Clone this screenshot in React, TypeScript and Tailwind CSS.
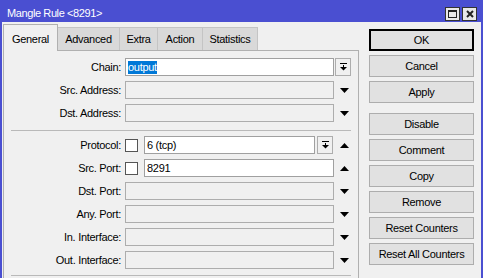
import React from "react";

const Down = () => (
  <svg width="9" height="5" viewBox="0 0 9 5" className="block">
    <path d="M0 0H9L4.5 5Z" fill="#000" />
  </svg>
);
const Up = () => (
  <svg width="9" height="5" viewBox="0 0 9 5" className="block">
    <path d="M0 5H9L4.5 0Z" fill="#000" />
  </svg>
);
const DropIcon = () => (
  <svg width="7" height="8" viewBox="0 0 7 8" className="block">
    <rect x="0" y="0" width="7" height="1" fill="#000" />
    <rect x="3" y="2" width="1" height="2" fill="#000" />
    <path d="M0 4H7L3.5 7.5Z" fill="#000" />
  </svg>
);

const DropBtn = () => (
  <div className="w-[16px] h-[18px] border border-[#adadad] bg-[#f0f0f0] flex items-center justify-center">
    <DropIcon />
  </div>
);

const Label = ({ children }: { children: React.ReactNode }) => (
  <div className="w-[117px] shrink-0 text-right text-black">{children}</div>
);

const Field = ({
  w,
  white,
  children,
}: {
  w: string;
  white?: boolean;
  children?: React.ReactNode;
}) => (
  <div
    className={`${w} h-[18px] border ${
      white ? "bg-white border-[#a0a0a0]" : "bg-[#f0f0f0] border-[#adadad]"
    } flex items-center pl-[2px] text-black`}
  >
    {children}
  </div>
);

const Check = () => (
  <div className="w-[13px] h-[13px] border border-[#555555] bg-white shrink-0" />
);

const ArrowRow = ({ label }: { label: string }) => (
  <div className="flex items-center h-[18px]">
    <Label>{label}</Label>
    <div className="ml-[4px]">
      <Field w="w-[209px]" />
    </div>
    <div className="ml-[6px]">
      <Down />
    </div>
  </div>
);

const Btn = ({
  children,
  def,
  cls = "",
}: {
  children: React.ReactNode;
  def?: boolean;
  cls?: string;
}) => (
  <div
    className={`w-[105px] h-[22px] flex items-center justify-center bg-[#e1e1e1] text-black ${
      def ? "border-2 border-black" : "border border-[#adadad]"
    } ${cls}`}
  >
    {children}
  </div>
);

export default function App() {
  const tabs = [
    { t: "Advanced", w: "w-[63px]" },
    { t: "Extra", w: "w-[39px]" },
    { t: "Action", w: "w-[46px]" },
    { t: "Statistics", w: "w-[56px]" },
  ];
  return (
    <div className="w-[483px] h-[278px] overflow-hidden bg-[#f0f0f0] flex flex-col font-['Liberation_Sans',Arial,sans-serif] text-[11px] leading-[13px] tracking-[-0.3px] select-none">
      {/* title bar */}
      <div className="h-[22px] shrink-0 bg-[#4a4fd1] flex items-start">
        <div className="pt-[7px] pl-[7px] text-white text-[11px] tracking-[-0.4px]">
          Mangle Rule &lt;8291&gt;
        </div>
        <div className="ml-auto mr-[6px] mt-[7px] flex gap-[2px]">
          <div className="w-[15px] h-[14px] bg-[#e8e8e8] border border-[#333] flex items-center justify-center">
            <svg width="9" height="8" viewBox="0 0 9 8" className="block">
              <rect x="0.5" y="0.5" width="8" height="7" fill="none" stroke="#222" />
              <rect x="0" y="0" width="9" height="2" fill="#222" />
            </svg>
          </div>
          <div className="w-[15px] h-[14px] bg-[#e8e8e8] border border-[#333] flex items-center justify-center">
            <svg width="8" height="8" viewBox="0 0 8 8" className="block">
              <path d="M1 1L7 7M7 1L1 7" stroke="#222" strokeWidth="2" />
            </svg>
          </div>
        </div>
      </div>

      {/* body */}
      <div className="flex-1 flex border-x-2 border-[#4a4fd1] pl-[1px]">
        {/* left: tabs + panel */}
        <div className="w-[356px] shrink-0 flex flex-col pt-[2px]">
          <div className="flex items-end h-[26px]">
            <div className="relative z-10 self-start w-[55px] h-[27px] bg-[#f0f0f0] border border-b-0 border-[#b0b0b0] flex justify-center pt-[8px] text-black">
              General
            </div>
            {tabs.map((x) => (
              <div
                key={x.t}
                className={`${x.w} -ml-px h-[23px] bg-[#d9d9d9] border border-b-0 border-[#c4c4c4] flex justify-center pt-[5px] text-black`}
              >
                {x.t}
              </div>
            ))}
          </div>
          <div className="h-[260px] border border-[#b0b0b0] flex flex-col pt-[7px]">
            <div className="flex flex-col gap-[5px]">
              <div className="flex items-center h-[18px]">
                <Label>Chain:</Label>
                <div className="ml-[4px]">
                  <Field w="w-[209px]" white>
                    <span className="bg-[#0078d7] text-white">output</span>
                  </Field>
                </div>
                <div className="ml-[1px]">
                  <DropBtn />
                </div>
              </div>
              <ArrowRow label="Src. Address:" />
              <ArrowRow label="Dst. Address:" />
            </div>
            <div className="mt-[8px] mx-[7px] h-px bg-[#b9b9b9]" />
            <div className="mt-[5px] flex flex-col gap-[5px]">
              <div className="flex items-center h-[18px]">
                <Label>Protocol:</Label>
                <div className="ml-[4px]">
                  <Check />
                </div>
                <div className="ml-[6px]">
                  <Field w="w-[171px]" white>
                    6 (tcp)
                  </Field>
                </div>
                <div className="ml-[2px]">
                  <DropBtn />
                </div>
                <div className="ml-[7px]">
                  <Up />
                </div>
              </div>
              <div className="flex items-center h-[18px]">
                <Label>Src. Port:</Label>
                <div className="ml-[4px]">
                  <Check />
                </div>
                <div className="ml-[6px]">
                  <Field w="w-[190px]" white>
                    8291
                  </Field>
                </div>
                <div className="ml-[6px]">
                  <Up />
                </div>
              </div>
              <ArrowRow label="Dst. Port:" />
              <ArrowRow label="Any. Port:" />
              <ArrowRow label="In. Interface:" />
              <ArrowRow label="Out. Interface:" />
            </div>
            <div className="mt-[6px] mx-[7px] h-px bg-[#b9b9b9]" />
          </div>
        </div>

        {/* right: buttons */}
        <div className="ml-[10px] pt-[7px] flex flex-col gap-[4px]">
          <Btn def>OK</Btn>
          <Btn>Cancel</Btn>
          <Btn>Apply</Btn>
          <Btn cls="mt-[6px]">Disable</Btn>
          <Btn>Comment</Btn>
          <Btn>Copy</Btn>
          <Btn>Remove</Btn>
          <Btn>Reset Counters</Btn>
          <Btn>Reset All Counters</Btn>
        </div>
      </div>
    </div>
  );
}
